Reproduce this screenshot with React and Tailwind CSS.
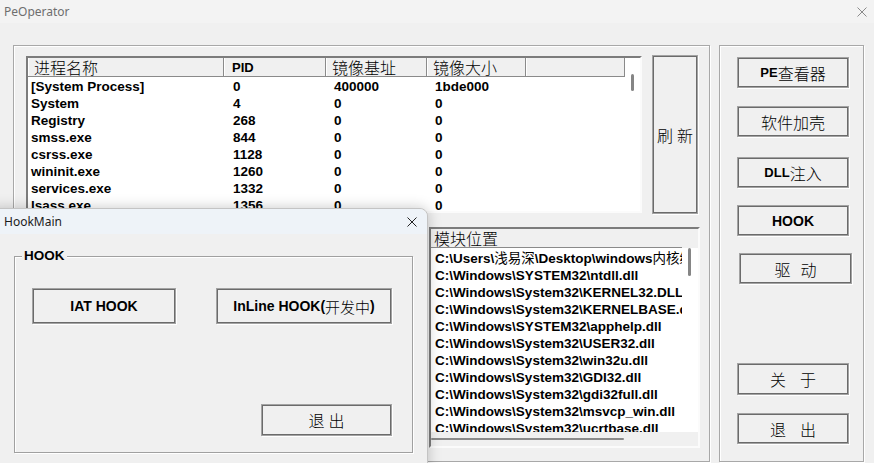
import React from 'react';

const cjk = "font-['Noto_Sans_CJK_SC',sans-serif] font-light";

const processes = [
  ['[System Process]', '0', '400000', '1bde000'],
  ['System', '4', '0', '0'],
  ['Registry', '268', '0', '0'],
  ['smss.exe', '844', '0', '0'],
  ['csrss.exe', '1128', '0', '0'],
  ['wininit.exe', '1260', '0', '0'],
  ['services.exe', '1332', '0', '0'],
  ['lsass.exe', '1356', '0', '0'],
];

const modules = [
  'C:\\Windows\\SYSTEM32\\ntdll.dll',
  'C:\\Windows\\System32\\KERNEL32.DLL',
  'C:\\Windows\\System32\\KERNELBASE.dll',
  'C:\\Windows\\SYSTEM32\\apphelp.dll',
  'C:\\Windows\\System32\\USER32.dll',
  'C:\\Windows\\System32\\win32u.dll',
  'C:\\Windows\\System32\\GDI32.dll',
  'C:\\Windows\\System32\\gdi32full.dll',
  'C:\\Windows\\System32\\msvcp_win.dll',
  'C:\\Windows\\System32\\ucrtbase.dll',
];

// classic win32 push button
function Btn({ className = '', children }) {
  return (
    <div
      className={`flex items-center justify-center shrink-0 bg-[#f0f0f0] border border-[#a3a3a3] shadow-[inset_0_0_0_1px_#6b6b6b,1px_1px_0_#ffffff] text-[14px] leading-none text-black ${className}`}
    >
      {children}
    </div>
  );
}

function CloseX({ className = '', color = '#555' }) {
  return (
    <svg className={className} viewBox="0 0 10 10" fill="none" stroke={color} strokeWidth="1">
      <path d="M0.5 0.5l9 9M9.5 0.5l-9 9" />
    </svg>
  );
}

const colW = ['w-[196px]', 'w-[102px]', 'w-[101px]', 'w-[99px]', 'w-[99px]'];
const headers = ['进程名称', 'PID', '镜像基址', '镜像大小', ''];

function ProcessList() {
  return (
    <div className="w-[616px] h-[157px] flex border-2 border-t-[#7c7c7c] border-l-[#7c7c7c] border-r-[#fbfbfb] border-b-[#fbfbfb] bg-white overflow-hidden">
      <div className="flex-1 min-w-0 flex flex-col overflow-hidden">
        <div className="flex h-[19px] shrink-0 bg-[#f0f0f0] border-b border-[#8a8a8a]">
          {headers.map((h, i) => (
            <div
              key={i}
              className={`${colW[i]} shrink-0 h-full border-r border-[#8a8a8a] border-l border-l-white flex items-center leading-none ${i === 1 ? 'pl-[7px] font-bold text-[13px]' : `pl-[5px] text-[16px] ${cjk}`}`}
            >
              {h}
            </div>
          ))}
        </div>
        <div className="pt-[1px] font-bold text-[13.5px] text-black">
          {processes.map((p, r) => (
            <div key={r} className="flex h-[17px] items-center leading-none whitespace-nowrap">
              <div className="w-[196px] pl-[3px] shrink-0">{p[0]}</div>
              <div className="w-[102px] pl-[9px] shrink-0">{p[1]}</div>
              <div className="w-[101px] pl-[8px] shrink-0">{p[2]}</div>
              <div className="w-[99px] pl-[8px] shrink-0">{p[3]}</div>
            </div>
          ))}
        </div>
      </div>
      <div className="w-[15px] shrink-0 bg-white pt-[16px] pl-[6px]">
        <div className="w-[3px] h-[17px] rounded-full bg-[#858585]" />
      </div>
    </div>
  );
}

function ModuleList() {
  return (
    <div className="w-[271px] h-[221px] flex flex-col border-2 border-t-[#7c7c7c] border-l-[#7c7c7c] border-r-[#fbfbfb] border-b-[#fbfbfb] bg-[#f0f0f0] overflow-hidden">
      <div className="flex flex-1 min-h-0 overflow-hidden">
        <div className="flex-1 min-w-0 flex flex-col overflow-hidden">
          <div className={`h-[19px] shrink-0 flex items-center pl-[3px] border-b border-[#8a8a8a] text-[16px] leading-none ${cjk}`}>
            模块位置
          </div>
          <div className="flex-1 bg-white pt-[2px] font-bold text-[13.5px] text-black overflow-hidden whitespace-nowrap">
            <div className="h-[17px] flex items-center pl-[4px] leading-none">
              C:\Users\<span className="font-normal">浅易深</span>\Desktop\windows<span className="font-normal">内核编程</span>
            </div>
            {modules.map((m, i) => (
              <div key={i} className="h-[17px] flex items-center pl-[4px] leading-none">
                {m}
              </div>
            ))}
          </div>
        </div>
        <div className="w-[16px] shrink-0 flex flex-col">
          <div className="h-[19px] shrink-0" />
          <div className="flex-1 bg-white pl-[6px]">
            <div className="w-[3px] h-[28px] rounded-full bg-[#858585]" />
          </div>
        </div>
      </div>
      <div className="h-[14px] shrink-0 pt-[6px]">
        <div className="w-[193px] h-[2px] rounded-full bg-[#8a8a8a]" />
      </div>
    </div>
  );
}

function HookDialog() {
  return (
    <div className="absolute left-[-10px] top-[208px] w-[438px] h-[275px] bg-[#f0f0f0] border border-[#c4c4c4] rounded-tr-[8px] shadow-[0_0_14px_rgba(0,0,0,0.22)] flex flex-col">
      <div className="h-[25px] shrink-0 bg-[#eef3f8] rounded-tr-[8px] flex items-center justify-between pl-[13px] pr-[10px]">
        <span className="text-[12px] text-[#1b1b1b] font-['Noto_Sans',sans-serif]">HookMain</span>
        <CloseX className="w-[10px] h-[10px]" color="#222" />
      </div>
      <div className="pl-[23px] pt-[22px]">
        <div className="relative w-[399px] h-[197px] border border-[#a0a0a0] shadow-[inset_1px_1px_0_#fff,1px_1px_0_#fff] pl-[17px] pt-[31px] pr-[20px]">
          <span className="absolute left-[7px] top-[-9px] px-[2px] bg-[#f0f0f0] font-bold text-[13.5px] leading-[16px]">HOOK</span>
          <div className="flex gap-[40px]">
            <Btn className="w-[144px] h-[36px] font-bold text-[13px]">IAT HOOK</Btn>
            <Btn className="w-[176px] h-[36px] font-bold text-[13px]">
              InLine HOOK(<span className={`${cjk} text-[15px]`}>开发中</span>)
            </Btn>
          </div>
          <div className="flex justify-end mt-[80px]">
            <Btn className={`w-[131px] h-[32px] gap-[4px] text-[16px] ${cjk}`}>
              <span>退</span>
              <span>出</span>
            </Btn>
          </div>
        </div>
      </div>
    </div>
  );
}

export default function App() {
  return (
    <div className="relative w-[874px] h-[463px] overflow-hidden bg-[#f0f0f0] font-['Liberation_Sans','Noto_Sans_CJK_SC',sans-serif] text-black">
      <div className="h-[23px] bg-[#f3f3f3] flex items-center justify-between pl-[4px] pr-[7px]">
        <span className="text-[12px] text-[#6e6e6e] font-['Noto_Sans',sans-serif]">PeOperator</span>
        <CloseX className="w-[10px] h-[10px]" color="#8a8a8a" />
      </div>

      <div className="flex gap-[9px] pl-[13px] pt-[22px]">
        {/* left group */}
        <div className="w-[697px] h-[417px] border border-[#a8a8a8] shadow-[inset_1px_1px_0_#fff,1px_1px_0_#fff] pl-[12px] pt-[10px]">
          <div className="flex gap-[10px]">
            <ProcessList />
            <Btn className={`w-[46px] h-[159px] mt-[-1px] gap-[4px] text-[16px] ${cjk}`}>
              <span>刷</span>
              <span>新</span>
            </Btn>
          </div>
          <div className="flex justify-end pr-[9px] mt-[13px]">
            <ModuleList />
          </div>
        </div>

        {/* right group */}
        <div className="w-[145px] h-[417px] border border-[#a8a8a8] shadow-[inset_1px_1px_0_#fff,1px_1px_0_#fff] pl-[17px] pt-[11px] flex flex-col">
          <Btn className="w-[112px] h-[31px]">
            <span className="font-bold text-[13px]">PE</span>
            <span className={`${cjk} text-[16px]`}>查看器</span>
          </Btn>
          <Btn className={`w-[112px] h-[31px] mt-[18px] text-[16px] ${cjk}`}>软件加壳</Btn>
          <Btn className="w-[112px] h-[31px] mt-[20px]">
            <span className="font-bold text-[13px]">DLL</span>
            <span className={`${cjk} text-[16px]`}>注入</span>
          </Btn>
          <Btn className="w-[112px] h-[31px] mt-[17px] font-bold text-[13px]">HOOK</Btn>
          <Btn className={`w-[113px] h-[31px] mt-[17px] ml-[2px] gap-[10px] text-[16px] ${cjk}`}>
            <span>驱</span>
            <span>动</span>
          </Btn>
          <Btn className={`w-[112px] h-[32px] mt-[79px] gap-[14px] text-[16px] ${cjk}`}>
            <span>关</span>
            <span>于</span>
          </Btn>
          <Btn className={`w-[112px] h-[31px] mt-[18px] gap-[14px] text-[16px] ${cjk}`}>
            <span>退</span>
            <span>出</span>
          </Btn>
        </div>
      </div>

      <HookDialog />
    </div>
  );
}
